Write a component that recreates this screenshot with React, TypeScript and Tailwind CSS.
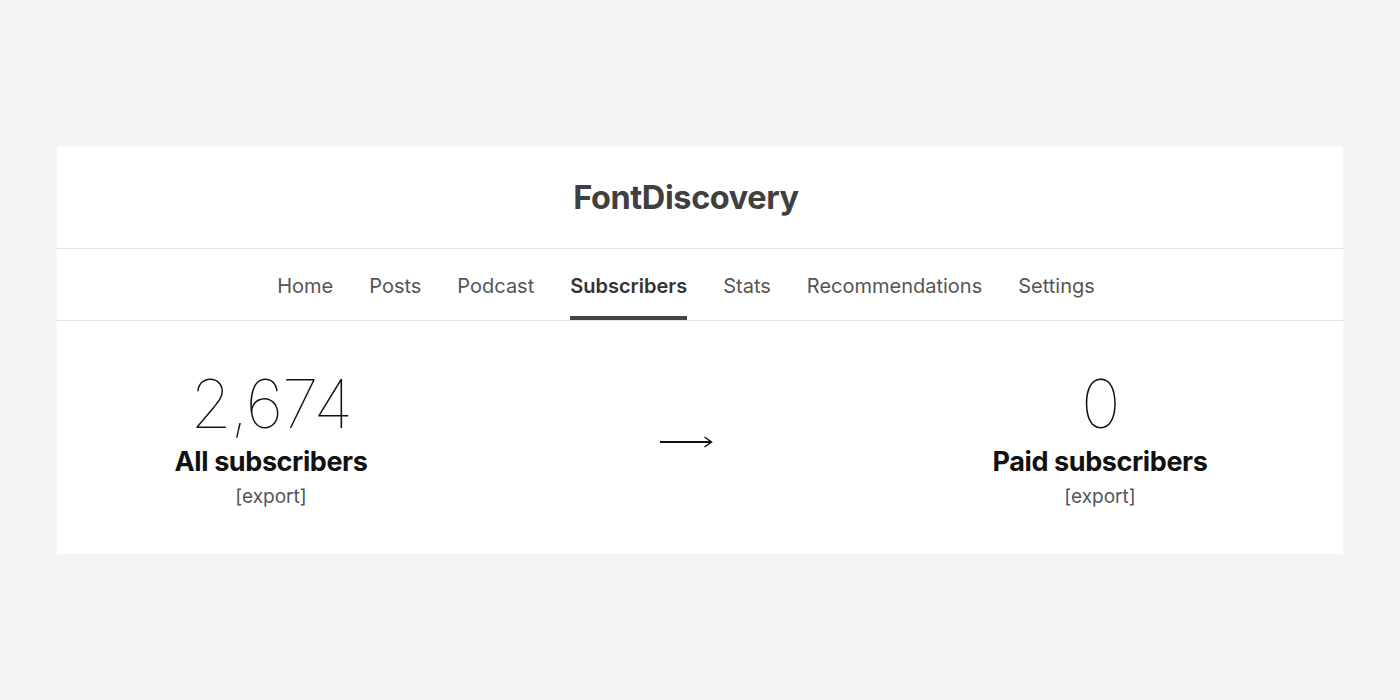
const NAV = ["Home", "Posts", "Podcast", "Subscribers", "Stats", "Recommendations", "Settings"];

function Stat({ value, label, width }: { value: string; label: string; width: string }) {
  return (
    <div className={`flex flex-col items-center ${width}`}>
      <div className="text-[67px] font-thin leading-none text-[#111] tracking-[-1.4px]">{value}</div>
      <div className="mt-[11px] text-[27px] font-bold leading-none text-[#111] tracking-[-0.4px]">{label}</div>
      <div className="mt-[12px] text-[19px] leading-none text-[#555]">[export]</div>
    </div>
  );
}

export default function App() {
  return (
    <div className="w-[1400px] h-[700px] bg-[#f5f5f5] pt-[147px] px-[57px]" style={{ fontFamily: "Inter, 'Noto Sans', sans-serif" }}>
      <div className="bg-white h-[407px]">
        {/* header */}
        <div className="h-[102px] border-b border-[#e2e2e2] flex items-center justify-center pr-[28px]">
          <h1 className="text-[32.5px] font-bold text-[#404040] tracking-[-0.4px] mt-[2px]">FontDiscovery</h1>
        </div>

        {/* tabs */}
        <nav className="h-[72px] border-b border-[#e2e2e2] flex justify-center gap-[36px] pr-[28px]">
          {NAV.map((n) => {
            const active = n === "Subscribers";
            return (
              <div
                key={n}
                className={`flex items-center text-[20px] ${
                  active ? "font-semibold text-[#333] border-b-[4px] border-[#444] pt-[6px]" : "text-[#555] pt-[2px]"
                }`}
              >
                {n}
              </div>
            );
          })}
        </nav>

        {/* counts */}
        <div className="flex pl-[94px] pt-[49px]">
          <Stat value="2,674" label="All subscribers" width="w-[240px]" />
          <div className="ml-[265px] w-[60px] flex justify-center pt-[65px]">
            <svg width="54" height="14" viewBox="0 0 54 14">
              <line x1="1" y1="7" x2="52" y2="7" stroke="#111" strokeWidth="2.2" />
              <path d="M45.5 2 L52.5 7 L45.5 12" fill="none" stroke="#111" strokeWidth="1.5" />
            </svg>
          </div>
          <Stat value="0" label="Paid subscribers" width="ml-[254px] w-[260px]" />
        </div>
      </div>
    </div>
  );
}
